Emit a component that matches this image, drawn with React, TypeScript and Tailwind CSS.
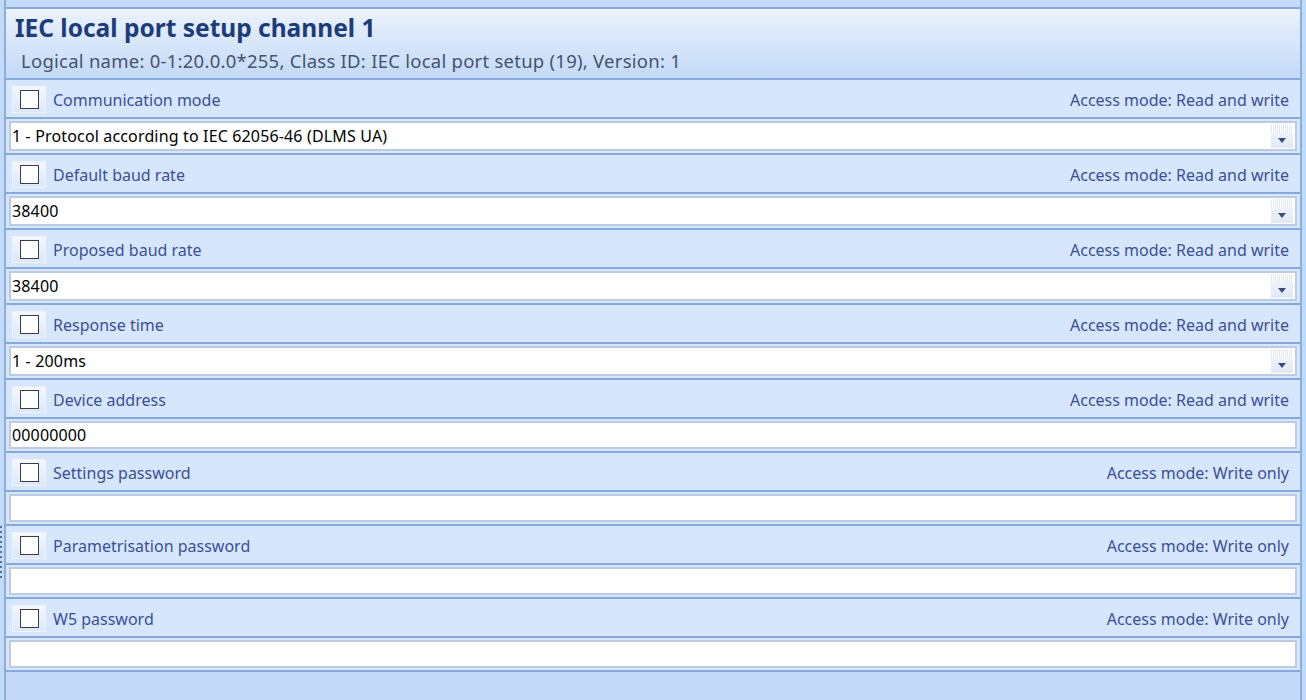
import React from "react";

type Prop = {
  label: string;
  access: string;
  value: string;
  combo?: boolean;
};

const props: Prop[] = [
  { label: "Communication mode", access: "Access mode: Read and write", value: "1 - Protocol according to IEC 62056-46 (DLMS UA)", combo: true },
  { label: "Default baud rate", access: "Access mode: Read and write", value: "38400", combo: true },
  { label: "Proposed baud rate", access: "Access mode: Read and write", value: "38400", combo: true },
  { label: "Response time", access: "Access mode: Read and write", value: "1 - 200ms", combo: true },
  { label: "Device address", access: "Access mode: Read and write", value: "00000000" },
  { label: "Settings password", access: "Access mode: Write only", value: "" },
  { label: "Parametrisation password", access: "Access mode: Write only", value: "" },
  { label: "W5 password", access: "Access mode: Write only", value: "" },
];

const font = { fontFamily: '"Noto Sans", "Open Sans", sans-serif' };

function Check() {
  return (
    <div className="w-[34px] h-[27px] ml-[6px] mt-[2px] flex items-center justify-center border border-[#eef4fd] bg-gradient-to-b from-[#f4f8fe] to-[#dbe8fa]">
      <div className="w-[19px] h-[19px] border-[1.5px] border-[#3e3e3e] bg-white" />
    </div>
  );
}

function Arrow() {
  return (
    <div className="w-[22px] h-[24px] mr-[2px] flex flex-col">
      <div className="h-[9px] bg-[repeating-linear-gradient(90deg,#e3e8f0_0px,#e3e8f0_1px,#ffffff_1px,#ffffff_2px)]" />
      <div className="flex-1 flex items-center justify-center bg-gradient-to-b from-[#eef3fa] to-[#dfe8f4]">
        <svg width="8" height="5" viewBox="0 0 8 5">
          <path d="M0 0 H8 L4 5 Z" fill="#3a4c7e" />
        </svg>
      </div>
    </div>
  );
}

function Row({ p }: { p: Prop }) {
  return (
    <div>
      <div className="h-[39px] border-b-2 border-[#86a9dc] bg-[#d5e6fd] flex items-center">
        <Check />
        <span className="ml-[7px] pt-[3px] text-[16px] text-[#3c4f96]">{p.label}</span>
        <span className="ml-auto mr-[11px] pt-[3px] text-[16px] text-[#3c4f96]">{p.access}</span>
      </div>
      <div className={`${p.combo ? "h-[36px]" : "h-[34px]"} border-b-2 border-[#86a9dc] bg-[#d5e6fd] px-[3px] py-[2px]`}>
        <div className="h-full border-2 border-[#bccbe0] bg-white flex items-center">
          <span className="pl-[1px] text-[16px] tracking-[0.15px] text-black">{p.value}</span>
          {p.combo && <div className="ml-auto"><Arrow /></div>}
        </div>
      </div>
    </div>
  );
}

export default function App() {
  return (
    <div className="w-[1306px] h-[700px] bg-[#c3dbf9] overflow-hidden relative" style={font}>
      <div className="absolute left-0 top-[526px] flex flex-col gap-[3px]">
        {[0, 1, 2, 3, 4, 5, 6, 7, 8, 9, 10].map(i => (
          <div key={i} className="w-[2px] h-[2px] bg-[#5b6f8f]" />
        ))}
      </div>
      <div className="ml-[4px] w-[1298px] h-[700px] border-x-2 border-[#8aaee0] pt-[7px]">
        <div className="border-y-2 border-[#86a9dc] h-[73px] bg-gradient-to-b from-[#ebf3fd] to-[#c3d9f7] pl-[9px] pt-[4px]">
          <div className="text-[24.5px] font-bold leading-[30px] text-[#1c3c7b]">IEC local port setup channel 1</div>
          <div className="ml-[6px] mt-[6px] text-[18.5px] tracking-[0.25px] leading-[24px] text-[#46526f]">
            Logical name: 0-1:20.0.0*255, Class ID: IEC local port setup (19), Version: 1
          </div>
        </div>
        {props.map(p => (
          <Row key={p.label} p={p} />
        ))}
      </div>
    </div>
  );
}
